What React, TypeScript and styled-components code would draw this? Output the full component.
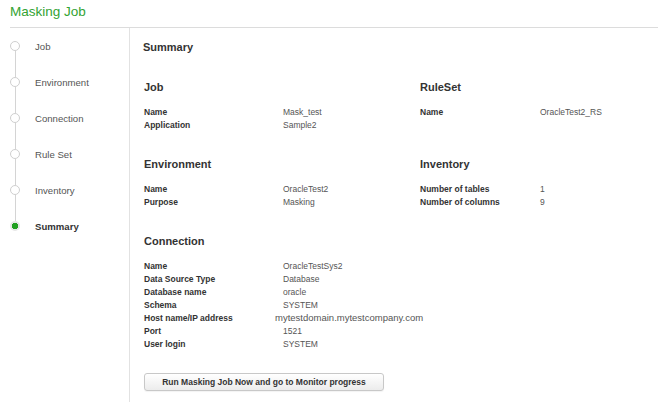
import React from "react";
import styled, { createGlobalStyle } from "styled-components";

const Global = createGlobalStyle`
  html, body, #root { margin: 0; padding: 0; height: 100%; }
  body { background: #fff; font-family: "Liberation Sans", Arial, sans-serif; }
  * { box-sizing: border-box; }
`;

const Page = styled.div`
  display: flex;
  flex-direction: column;
  height: 100%;
  overflow: hidden;
`;

const Header = styled.header`
  margin-left: 10px;
  height: 28px;
  padding-top: 4px;
  border-bottom: 1px solid #dcdcdc;
  flex: none;
`;

const Title = styled.h1`
  margin: 0;
  font-size: 13.5px;
  line-height: 16px;
  font-weight: normal;
  color: #33a333;
`;

const Body = styled.div`
  display: flex;
  flex: 1;
  min-height: 0;
`;

const Sidebar = styled.nav`
  width: 130px;
  flex: none;
  border-right: 1px solid #e2e2e2;
  display: flex;
  flex-direction: column;
`;

const Step = styled.div`
  height: 36px;
  display: flex;
  align-items: stretch;
  gap: 15px;
  padding-left: 10px;
`;

const Marker = styled.div`
  width: 10px;
  display: flex;
  flex-direction: column;
  align-items: center;
`;

const Segment = styled.div<{ $hidden?: boolean }>`
  flex: 1;
  width: 1px;
  background: ${(p) => (p.$hidden ? "transparent" : "#d4d4d4")};
`;

const Dot = styled.div<{ $active?: boolean }>`
  width: 10px;
  height: 10px;
  border-radius: 50%;
  flex: none;
  ${(p) =>
    p.$active
      ? `background: radial-gradient(circle, #22a022 0 3px, #e6e6e6 3.3px);`
      : `background: #fff; border: 1px solid #cfcfcf;`}
`;

const StepLabel = styled.span<{ $active?: boolean }>`
  align-self: center;
  font-size: 9.6px;
  color: ${(p) => (p.$active ? "#333" : "#555")};
  font-weight: ${(p) => (p.$active ? "bold" : "normal")};
`;

const Content = styled.main`
  flex: 1;
  padding: 11px 0 0 14px;
  display: flex;
  flex-direction: column;
`;

const PageTitle = styled.h2`
  margin: 0 0 24px -1px;
  font-size: 11px;
  line-height: 16px;
  font-weight: bold;
  color: #333;
`;

const Sections = styled.div`
  display: grid;
  grid-template-columns: 276px 1fr;
  row-gap: 25px;
  align-items: start;
`;

const Section = styled.section``;

const SectionTitle = styled.h3`
  margin: 0 0 10px;
  font-size: 11px;
  line-height: 16px;
  font-weight: bold;
  color: #333;
`;

const Rows = styled.div<{ $labelWidth: number }>`
  display: grid;
  grid-template-columns: ${(p) => p.$labelWidth}px 1fr;
  grid-auto-rows: 13px;
  align-items: center;
`;

const Label = styled.span`
  font-size: 8.5px;
  font-weight: bold;
  color: #333;
  white-space: nowrap;
`;

const Value = styled.span<{ $large?: boolean }>`
  font-size: ${(p) => (p.$large ? "9.5px" : "8.5px")};
  margin-left: ${(p) => (p.$large ? "-8px" : "0")};
  color: #555;
  white-space: nowrap;
`;

const Button = styled.button`
  margin-top: 23px;
  width: 240px;
  height: 18px;
  padding: 0;
  border: 1px solid #c8c8c8;
  border-radius: 3px;
  background: linear-gradient(#ffffff, #ececec);
  font-family: "Liberation Sans", Arial, sans-serif;
  font-size: 8.5px;
  font-weight: bold;
  color: #333;
  align-self: flex-start;
  box-shadow: 0 1px 1px rgba(0, 0, 0, 0.05);
`;

type Row = [string, string, boolean?];

const steps = ["Job", "Environment", "Connection", "Rule Set", "Inventory", "Summary"];

const sections: { title: string; labelWidth: number; rows: Row[] }[] = [
  { title: "Job", labelWidth: 139, rows: [["Name", "Mask_test"], ["Application", "Sample2"]] },
  { title: "RuleSet", labelWidth: 120, rows: [["Name", "OracleTest2_RS"]] },
  { title: "Environment", labelWidth: 139, rows: [["Name", "OracleTest2"], ["Purpose", "Masking"]] },
  {
    title: "Inventory",
    labelWidth: 120,
    rows: [
      ["Number of tables", "1"],
      ["Number of columns", "9"],
    ],
  },
  {
    title: "Connection",
    labelWidth: 139,
    rows: [
      ["Name", "OracleTestSys2"],
      ["Data Source Type", "Database"],
      ["Database name", "oracle"],
      ["Schema", "SYSTEM"],
      ["Host name/IP address", "mytestdomain.mytestcompany.com", true],
      ["Port", "1521"],
      ["User login", "SYSTEM"],
    ],
  },
];

export default function App() {
  return (
    <Page>
      <Global />
      <Header>
        <Title>Masking Job</Title>
      </Header>
      <Body>
        <Sidebar>
          {steps.map((s, i) => {
            const active = i === steps.length - 1;
            return (
              <Step key={s}>
                <Marker>
                  <Segment $hidden={i === 0} />
                  <Dot $active={active} />
                  <Segment $hidden={i === steps.length - 1} />
                </Marker>
                <StepLabel $active={active}>{s}</StepLabel>
              </Step>
            );
          })}
        </Sidebar>
        <Content>
          <PageTitle>Summary</PageTitle>
          <Sections>
            {sections.map((sec) => (
              <Section key={sec.title}>
                <SectionTitle>{sec.title}</SectionTitle>
                <Rows $labelWidth={sec.labelWidth}>
                  {sec.rows.map(([l, v, large]) => (
                    <React.Fragment key={l}>
                      <Label>{l}</Label>
                      <Value $large={large}>{v}</Value>
                    </React.Fragment>
                  ))}
                </Rows>
              </Section>
            ))}
          </Sections>
          <Button>Run Masking Job Now and go to Monitor progress</Button>
        </Content>
      </Body>
    </Page>
  );
}
